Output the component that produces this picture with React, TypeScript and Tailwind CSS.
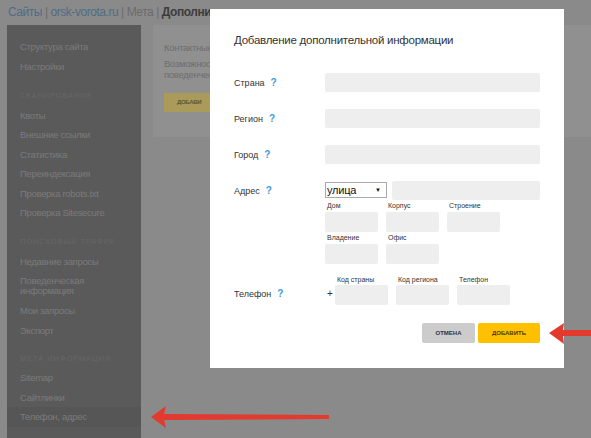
import React from "react";

const sideFont = { fontFamily: '"Liberation Sans", Arial, sans-serif' };

function Item({ children, active }: { children: React.ReactNode; active?: boolean }) {
  return (
    <div className={`h-[19.5px] leading-[19.5px] pl-[13px] text-[9.5px] tracking-[-0.3px] text-[#7b7b7b] whitespace-nowrap ${active ? "bg-[#565656]" : ""}`}>
      {children}
    </div>
  );
}

function Header({ children, mt }: { children: React.ReactNode; mt: string }) {
  return (
    <div className={`${mt} h-[19.5px] leading-[19.5px] pl-[13px] text-[7.5px] tracking-[0.9px] text-[#676767] whitespace-nowrap`}>{children}</div>
  );
}

function Q() {
  return <span className="ml-[6px] text-[#3d9be0] font-bold text-[10px]">?</span>;
}

function Box() {
  return <div className="w-[53px] h-[20px] bg-[#eeeeee] rounded-[2px]" />;
}

function SmallField({ label, lh = "h-[12px] leading-[12px]" }: { label: string; lh?: string }) {
  return (
    <div className="flex flex-col w-[53px]">
      <div className={`${lh} pl-[2px] text-[7px] text-[#333] whitespace-nowrap`}>{label}</div>
      <Box />
    </div>
  );
}

export default function App() {
  return (
    <div className="relative w-[591px] h-[438px] overflow-hidden bg-[#8a8a8a]" style={sideFont}>
      {/* breadcrumb */}
      <div className="h-[25px] pl-[8px] pt-[4px] text-[12px] tracking-[-0.45px] leading-[16px] whitespace-nowrap">
        <span className="text-[#4f6c84]">Сайты</span>
        <span className="text-[#6a6a6a]"> | </span>
        <span className="text-[#4f6c84]">orsk-vorota.ru</span>
        <span className="text-[#6a6a6a]"> | Мета | </span>
        <span className="text-[#3c3c3c] font-bold">Дополнит</span>
      </div>
      <div className="flex pl-[7px]">
        {/* sidebar */}
        <div className="w-[134px] h-[413px] bg-[#5a5a5a] pt-[12px]">
          <Item>Структура сайта</Item>
          <Item>Настройки</Item>
          <Header mt="mt-[10px]">СКАНИРОВАНИЕ</Header>
          <Item>Квоты</Item>
          <Item>Внешние ссылки</Item>
          <Item>Статистика</Item>
          <Item>Переиндексация</Item>
          <Item>Проверка robots.txt</Item>
          <Item>Проверка Sitesecure</Item>
          <Header mt="mt-[9.5px]">ПОИСКОВЫЙ ТРАФИК</Header>
          <Item>Недавние запросы</Item>
          <div className="py-[5px] leading-[10px] pl-[13px] text-[9.5px] tracking-[-0.3px] text-[#7b7b7b]">
            Поведенческая
            <br />
            информация
          </div>
          <Item>Мои запросы</Item>
          <Item>Экспорт</Item>
          <Header mt="mt-[8.5px]">МЕТА ИНФОРМАЦИЯ</Header>
          <Item>Sitemap</Item>
          <Item>Сайтлинки</Item>
          <Item active>Телефон, адрес</Item>
        </div>
        {/* content panel */}
        <div className="ml-[12px] flex-1 h-[112px] bg-[#909090] pl-[11px] pt-[16px] text-[9.5px] tracking-[-0.3px] text-[#6e6e6e] whitespace-nowrap">
          <div className="leading-[14px]">Контактные</div>
          <div className="mt-[3px] leading-[11px]">Возможност</div>
          <div className="leading-[11px]">поведенческ</div>
          <div className="mt-[13px] w-[46px] h-[19px] bg-[#ab9b5a] pl-[13px] text-[6px] font-bold leading-[19px] text-[#5e5630]">
            ДОБАВИ
          </div>
        </div>
      </div>

      {/* modal */}
      <div className="absolute left-[210px] top-[9px] w-[354px] h-[359px] bg-white px-[24px] text-[#333]">
        <div className="pt-[22px] text-[11.5px] tracking-[-0.25px] leading-[18px] text-[#333]">Добавление дополнительной информации</div>

        <div className="mt-[24px] flex items-center h-[19px]">
          <div className="w-[91px] text-[9px]">Страна<Q /></div>
          <div className="flex-1 h-[19px] bg-[#eeeeee] rounded-[2px]" />
        </div>
        <div className="mt-[17px] flex items-center h-[19px]">
          <div className="w-[91px] text-[9px]">Регион<Q /></div>
          <div className="flex-1 h-[19px] bg-[#eeeeee] rounded-[2px]" />
        </div>
        <div className="mt-[17px] flex items-center h-[19px]">
          <div className="w-[91px] text-[9px]">Город<Q /></div>
          <div className="flex-1 h-[19px] bg-[#eeeeee] rounded-[2px]" />
        </div>

        <div className="mt-[17px] flex">
          <div className="w-[91px] text-[9px] leading-[19px]">Адрес<Q /></div>
          <div className="flex-1 flex flex-col">
            <div className="flex gap-[5px] items-start">
              <div className="mt-[1px] w-[62px] h-[16px] border border-[#a9a9a9] flex items-center justify-between pl-[1px] pr-[5px]">
                <span className="text-[11px] tracking-[-0.2px] leading-[14px] text-[#111]">улица</span>
                <span className="text-[6px] text-[#111]">▼</span>
              </div>
              <div className="flex-1 h-[19px] bg-[#eeeeee] rounded-[2px]" />
            </div>
            <div className="flex gap-[8px]">
              <SmallField label="Дом" />
              <SmallField label="Корпус" />
              <SmallField label="Строение" />
            </div>
            <div className="flex gap-[8px]">
              <SmallField label="Владение" />
              <SmallField label="Офис" />
            </div>
          </div>
        </div>

        <div className="mt-[11px] flex items-end">
          <div className="w-[91px] text-[9px] leading-[20px] pb-[1px]">Телефон<Q /></div>
          <div className="w-[10px] text-[10px] leading-[20px] pl-[2px] pb-[1px]">+</div>
          <div className="flex gap-[8px]">
            <SmallField label="Код страны" lh="h-[10px] leading-[10px]" />
            <SmallField label="Код региона" lh="h-[10px] leading-[10px]" />
            <SmallField label="Телефон" lh="h-[10px] leading-[10px]" />
          </div>
        </div>

        <div className="mt-[18px] flex justify-end gap-[3px]">
          <div className="w-[53px] h-[20px] bg-[#cccccc] rounded-[2px] flex items-center justify-center text-[6px] font-bold text-[#333]">
            ОТМЕНА
          </div>
          <div className="w-[62px] h-[20px] bg-[#ffc000] rounded-[2px] flex items-center justify-center text-[6px] font-bold text-[#4a3b00]">
            ДОБАВИТЬ
          </div>
        </div>
      </div>

      {/* red arrows */}
      <svg className="absolute left-[547px] top-[320px]" width="44" height="28" viewBox="0 0 44 28">
        <polygon points="2,13 17,3 16,10 44,10 44,16 16,16 17,24" fill="#e23a2e" />
      </svg>
      <svg className="absolute left-[149px] top-[403px]" width="182" height="28" viewBox="0 0 182 28">
        <polygon points="2,14 17,3 15,11 180,12 180,16 15,17 17,25" fill="#e23a2e" />
      </svg>
    </div>
  );
}
